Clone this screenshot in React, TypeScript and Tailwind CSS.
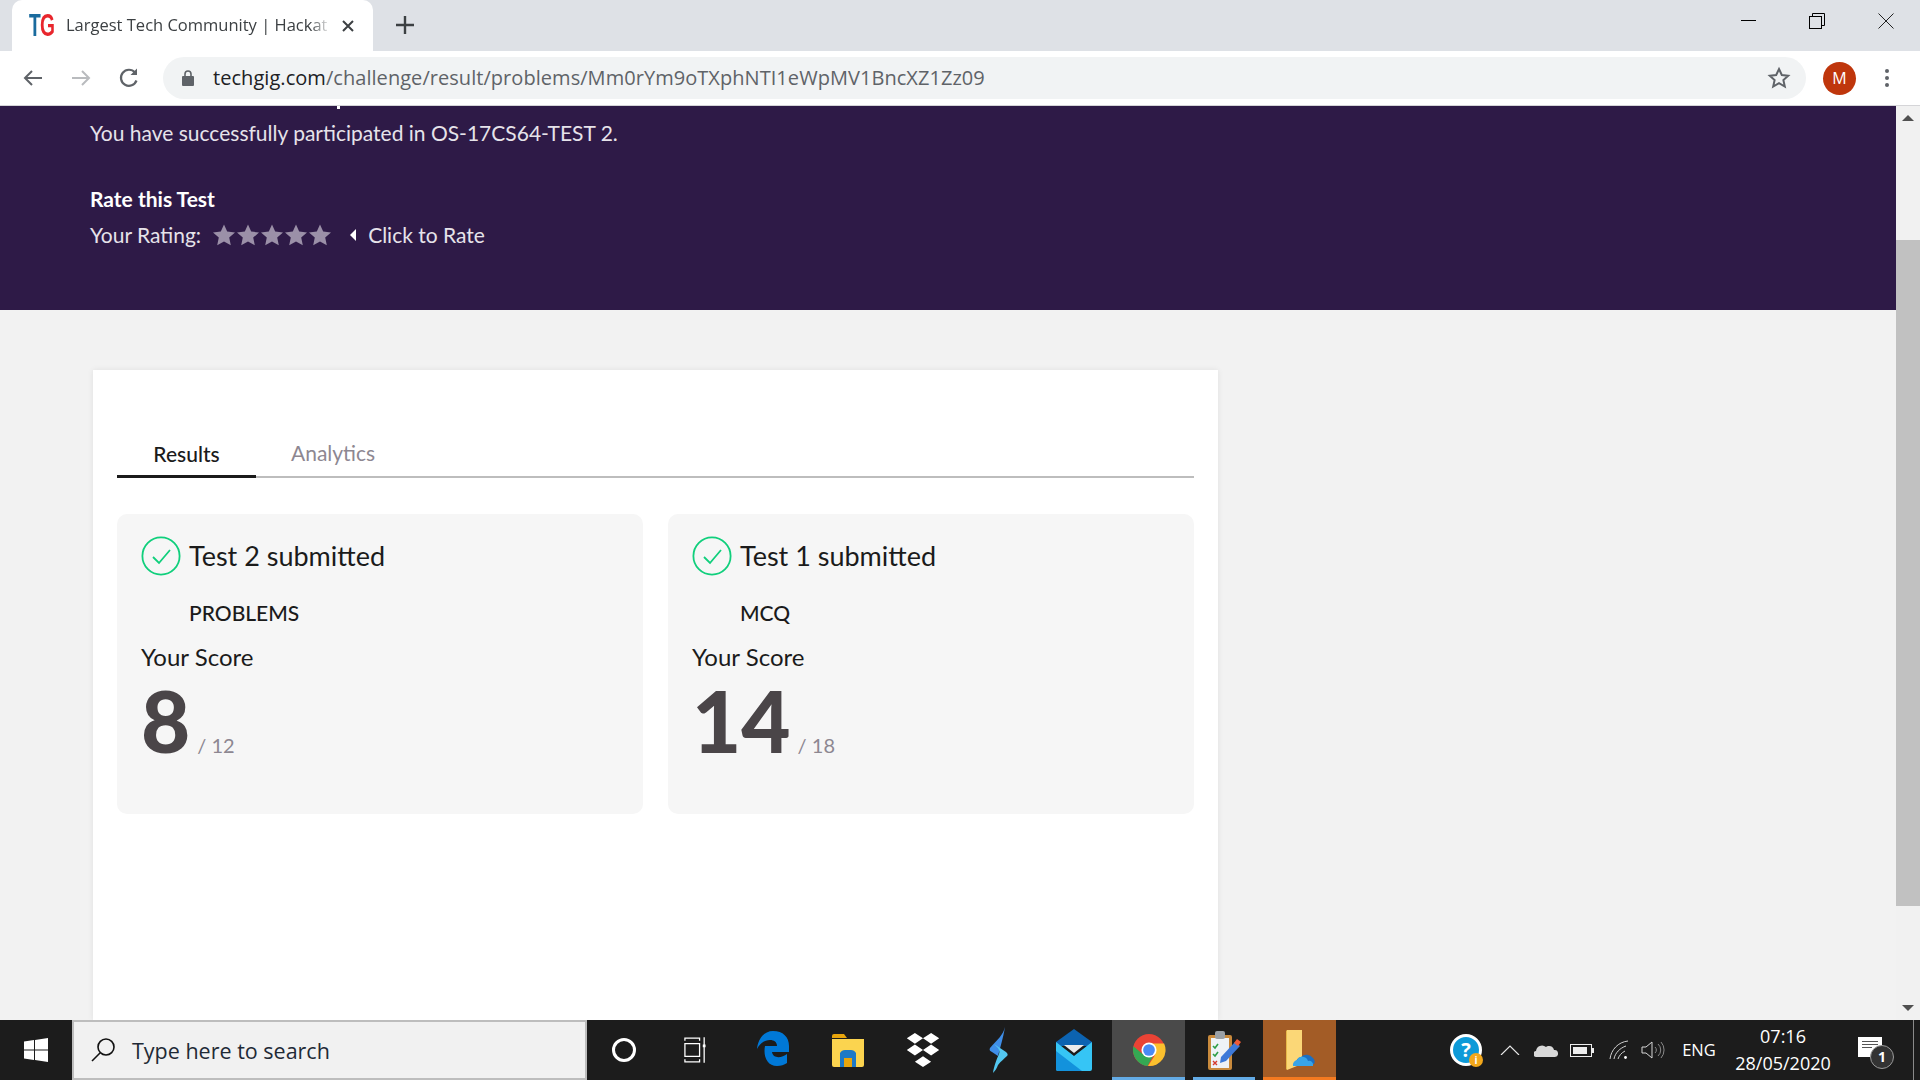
const LATO = "font-['Lato','Noto_Sans',sans-serif]";

function Star({ className }: { className?: string }) {
  return (
    <svg viewBox="0 0 24 24" className={className}>
      <path fill="currentColor" d="M12 1.5l3.2 7.1 7.8.8-5.8 5.2 1.6 7.7L12 18.4l-6.8 3.9 1.6-7.7L1 9.4l7.8-.8z" />
    </svg>
  );
}

function CheckCircle() {
  return (
    <svg viewBox="0 0 40 40" className="h-[40px] w-[40px] shrink-0">
      <circle cx="20" cy="20" r="18.6" fill="none" stroke="#10cf7c" strokeWidth="1.8" />
      <path d="M12 21l6 6 11-13" fill="none" stroke="#10cf7c" strokeWidth="1.8" />
    </svg>
  );
}

function ResultCard({ title, kind, score, total }: { title: string; kind: string; score: string; total: string }) {
  return (
    <div className="h-[300px] w-[526px] rounded-[10px] bg-[#f6f6f6] px-[24px] pt-[22px]">
      <div className="flex h-[40px] items-center gap-[8px]">
        <CheckCircle />
        <span className="text-[27px] leading-[40px] text-[#1b1b1b]">{title}</span>
      </div>
      <div className="mt-[23px] pl-[48px] text-[21px] leading-[28px] font-medium text-[#1b1b1b]">{kind}</div>
      <div className="mt-[15px] text-[24px] leading-[30px] text-[#1b1b1b]">Your Score</div>
      <div className="mt-[3px] flex items-baseline gap-[7px]">
        <span className="text-[85px] leading-[90px] font-black text-[#4a4548]">{score}</span>
        <span className="text-[20px] text-[#8d8791]">/ {total}</span>
      </div>
    </div>
  );
}

function WindowControls() {
  return (
    <div className="ml-auto flex h-[51px] items-start">
      <div className="flex h-[40px] w-[69px] items-center justify-center">
        <div className="h-[1px] w-[15px] bg-black" />
      </div>
      <div className="flex h-[42px] w-[69px] items-center justify-center pr-[2px]">
        <svg viewBox="0 0 16 16" className="h-[16px] w-[16px]" fill="none" stroke="#000" strokeWidth="1">
          <rect x="0.5" y="3.5" width="12" height="12" />
          <path d="M3.5 3.5v-3h12v12h-3" />
        </svg>
      </div>
      <div className="flex h-[42px] w-[68px] items-center justify-center">
        <svg viewBox="0 0 16 16" className="h-[16px] w-[16px]" fill="none" stroke="#222" strokeWidth="1">
          <path d="M0.5 0.5l15 15M15.5 0.5l-15 15" />
        </svg>
      </div>
    </div>
  );
}

function TabStrip() {
  return (
    <div className="flex h-[51px] bg-[#dee1e6] pl-[12px]">
      <div className="flex h-[51px] w-[361px] items-center rounded-t-[10px] bg-white pr-[19px] pl-[17px]">
        <span className="w-[29px] shrink-0 origin-left scale-x-[0.62] font-['Liberation_Sans',sans-serif] text-[31px] leading-none font-bold tracking-[-1px] whitespace-nowrap">
          <span className="text-[#1a6b9e]">T</span>
          <span className="text-[#e8262d]">G</span>
        </span>
        <span className="ml-[8px] w-[265px] overflow-hidden font-['Open_Sans',sans-serif] text-[16.5px] whitespace-nowrap text-[#3c4043] [mask-image:linear-gradient(to_right,#000_92%,transparent)]">
          Largest Tech Community | Hackat
        </span>
        <svg viewBox="0 0 12 12" className="ml-auto h-[12px] w-[12px]" fill="none" stroke="#3c4043" strokeWidth="2">
          <path d="M1 1l10 10M11 1L1 11" />
        </svg>
      </div>
      <svg viewBox="0 0 18 18" className="mt-[16px] ml-[23px] h-[18px] w-[18px]" fill="none" stroke="#3c4043" strokeWidth="2.4">
        <path d="M9 0v18M0 9h18" />
      </svg>
      <WindowControls />
    </div>
  );
}

function AddressBar() {
  return (
    <div className="flex h-[55px] items-center border-b border-[#d5d5d8] bg-white">
      <div className="flex w-[163px] items-center">
        <svg viewBox="0 0 24 24" className="ml-[21px] h-[24px] w-[24px]" fill="none" stroke="#5f6368" strokeWidth="2">
          <path d="M21 12H4M11 5l-7 7 7 7" />
        </svg>
        <svg viewBox="0 0 24 24" className="ml-[24px] h-[24px] w-[24px]" fill="none" stroke="#b9bbbe" strokeWidth="2">
          <path d="M3 12h17M13 5l7 7-7 7" />
        </svg>
        <svg viewBox="0 0 24 24" className="ml-[24px] h-[24px] w-[24px]" fill="none" stroke="#5f6368" strokeWidth="2.2">
          <path d="M19.5 14.5A8 8 0 1 1 18 6.5" />
          <path d="M20 2.5v6.5h-6.5" fill="#5f6368" stroke="none" />
        </svg>
      </div>
      <div className="flex h-[42px] w-[1643px] items-center rounded-full bg-[#f1f3f4] pr-[15px] pl-[19px]">
        <svg viewBox="0 0 12 16" className="h-[16px] w-[12px]">
          <path fill="#5f6368" d="M1 6h10a1 1 0 0 1 1 1v8a1 1 0 0 1-1 1H1a1 1 0 0 1-1-1V7a1 1 0 0 1 1-1z" />
          <path fill="none" stroke="#5f6368" strokeWidth="1.6" d="M3 6V4a3 3 0 0 1 6 0v2" />
        </svg>
        <span className="ml-[19px] font-['Open_Sans',sans-serif] text-[20px] tracking-[0.05px] whitespace-nowrap text-[#5f6368]">
          <span className="text-[#202124]">techgig.com</span>/challenge/result/problems/Mm0rYm9oTXphNTI1eWpMV1BncXZ1Zz09
        </span>
        <svg viewBox="0 0 24 24" className="ml-auto h-[24px] w-[24px]" fill="none" stroke="#5f6368" strokeWidth="2">
          <path d="M12 3l2.8 6 6.4.7-4.8 4.4 1.4 6.4L12 17.2l-5.8 3.3 1.4-6.4-4.8-4.4 6.4-.7z" />
        </svg>
      </div>
      <div className="ml-[17px] flex h-[33px] w-[33px] items-center justify-center rounded-full bg-[#bf360c] font-['Open_Sans',sans-serif] text-[16px] text-white">
        M
      </div>
      <div className="ml-[29px] flex flex-col gap-[3px]">
        <div className="h-[4px] w-[4px] rounded-full bg-[#5f6368]" />
        <div className="h-[4px] w-[4px] rounded-full bg-[#5f6368]" />
        <div className="h-[4px] w-[4px] rounded-full bg-[#5f6368]" />
      </div>
    </div>
  );
}

function Scrollbar() {
  return (
    <div className="flex w-[24px] shrink-0 flex-col bg-[#f1f1f1]">
      <div className="flex h-[24px] items-center justify-center">
        <div className="h-0 w-0 border-x-[6px] border-b-[6px] border-x-transparent border-b-[#505050]" />
      </div>
      <div className="mt-[110px] h-[666px] bg-[#c1c1c1]" />
      <div className="mt-auto flex h-[24px] items-center justify-center">
        <div className="h-0 w-0 border-x-[6px] border-t-[6px] border-x-transparent border-t-[#505050]" />
      </div>
    </div>
  );
}

function Page() {
  return (
    <div className={`relative flex min-w-0 flex-1 flex-col overflow-hidden bg-[#f2f2f2] ${LATO}`}>
      <div className="absolute top-0 left-[337px] h-[3px] w-[3px] bg-white" />
      <div className="h-[204px] shrink-0 bg-[#2e1a47] pt-[13px] pl-[90px] text-white">
        <div className="text-[21px] leading-[28px] text-[#e6e3ea]">You have successfully participated in OS-17CS64-TEST 2.</div>
        <div className="mt-[38px] text-[21px] leading-[28px] font-bold">Rate this Test</div>
        <div className="mt-[8px] flex h-[28px] items-center text-[21px] text-[#e6e3ea]">
          <span>Your Rating:</span>
          <div className="ml-[11px] flex text-[#9b90a8]">
            <Star className="h-[24px] w-[24px]" />
            <Star className="h-[24px] w-[24px]" />
            <Star className="h-[24px] w-[24px]" />
            <Star className="h-[24px] w-[24px]" />
            <Star className="h-[24px] w-[24px]" />
          </div>
          <div className="mr-[12px] ml-[18px] h-0 w-0 border-y-[6px] border-r-[6px] border-y-transparent border-r-white" />
          <span>Click to Rate</span>
        </div>
      </div>
      <div className="mt-[60px] ml-[93px] w-[1125px] flex-1 bg-white px-[24px] pt-[62px] shadow-[0_0_6px_rgba(0,0,0,0.08)]">
        <div className="flex h-[46px] items-end border-b-2 border-[#bdbdbd]">
          <div className="-mb-[2px] flex h-[46px] w-[139px] items-center justify-center border-b-[3px] border-[#1b1b1b] text-[21px] font-medium text-[#1b1b1b]">
            Results
          </div>
          <div className="flex h-[46px] items-center pl-[35px] text-[21px] text-[#8d8791]">Analytics</div>
        </div>
        <div className="mt-[36px] flex gap-[25px]">
          <ResultCard title="Test 2 submitted" kind="PROBLEMS" score="8" total="12" />
          <ResultCard title="Test 1 submitted" kind="MCQ" score="14" total="18" />
        </div>
      </div>
    </div>
  );
}

function Slot({ w, className, children }: { w: string; className?: string; children: React.ReactNode }) {
  return <div className={`flex h-full items-center justify-center ${w} ${className ?? ""}`}>{children}</div>;
}

function Taskbar() {
  return (
    <div className="flex h-[60px] shrink-0 items-stretch bg-[#1c1c1c]">
      <Slot w="w-[72px]">
        <svg viewBox="0 0 24 24" className="h-[24px] w-[24px]" fill="#fff">
          <path d="M0 3.5l10-1.4v9.4H0zM11 2l13-2v11.5H11zM0 12.5h10v9.4L0 20.5zM11 12.5h13V24l-13-2z" />
        </svg>
      </Slot>
      <div className="flex w-[515px] items-center border-2 border-[#bdbdbd] bg-[#f1f1f1] pl-[16px] font-['Open_Sans',sans-serif] text-[21.5px] text-[#1f2a36]">
        <svg viewBox="0 0 26 26" className="h-[26px] w-[26px]" fill="none" stroke="#111" strokeWidth="1.6">
          <circle cx="16" cy="10" r="8" />
          <path d="M10 16L2 24" />
        </svg>
        <span className="mt-[3px] ml-[16px]">Type here to search</span>
      </div>
      <Slot w="w-[74px]">
        <div className="h-[24px] w-[24px] rounded-full border-[3px] border-white" />
      </Slot>
      <Slot w="w-[68px]">
        <svg viewBox="0 0 24 30" className="h-[28px] w-[22px]" fill="none" stroke="#fff" strokeWidth="1.4">
          <path d="M1 5V2h16v3M1 25v3h16v-3M1 8h16v14H1zM22 1v28" />
          <rect x="20.5" y="9" width="3" height="3" fill="#fff" stroke="none" />
        </svg>
      </Slot>
      <Slot w="w-[84px]" className="pl-[3px]">
        <svg viewBox="0 0 32 40" className="h-[40px] w-[32px]" fill="none">
          <path fill="#0078d7" d="M16 1C7 1 1 9 0 19c3-6 8-9 13-9 4 0 7 2 7 6H8c-2 10 2 20 12 20 4 0 7-1 10-3v-9c-5 4-14 5-15-2h17v-6C32 7 26 1 16 1z" />
        </svg>
      </Slot>
      <Slot w="w-[72px]" className="pr-[2px]">
        <svg viewBox="0 0 32 34" className="h-[34px] w-[32px]">
          <path fill="#e8a50c" d="M0 3a2 2 0 0 1 2-2h10l3 4H0z" />
          <path fill="#fbd44f" d="M0 6h32v26a2 2 0 0 1-2 2H2a2 2 0 0 1-2-2z" />
          <path fill="#1d79c7" d="M8 20a6 6 0 0 1 6-3h4a6 6 0 0 1 6 3v14h-4v-9h-8v9H8z" />
          <rect x="12" y="25" width="8" height="9" fill="#e8a50c" />
        </svg>
      </Slot>
      <Slot w="w-[78px]" className="pr-[2px]">
        <svg viewBox="0 0 36 40" className="h-[36px] w-[34px]" fill="#fff">
          <path d="M9 1l9 6-9 6-9-6zM27 1l9 6-9 6-9-6zM9 14l9 6-9 6-9-6zM27 14l9 6-9 6-9-6zM18 27l9 6-9 6-9-6z" />
        </svg>
      </Slot>
      <Slot w="w-[74px]" className="pr-[2px]">
        <svg viewBox="0 0 20 46" className="h-[46px] w-[20px]">
          <path fill="#3f8ee8" d="M16 0C14 8 9 12 1 21c-1 2 0 3 2 4l6 4c2-8 5-17 7-29z" />
          <path fill="#53c7f0" d="M5 17l12 8c2 2 2 3 1 4-3 3-6 5-9 9-1 3-3 6-5 8 1-7 4-15 6-19 1-3 0-5-2-7z" />
        </svg>
      </Slot>
      <Slot w="w-[75px]" className="pr-[2px]">
        <svg viewBox="0 0 36 42" className="h-[42px] w-[36px]">
          <path fill="#0c63b1" d="M18 0l18 13v4H0v-4z" />
          <path fill="#36c5f5" d="M0 13l18 14 18-14v27a2 2 0 0 1-2 2H2a2 2 0 0 1-2-2z" />
          <path fill="#1392dc" d="M0 40V22l26 20H2a2 2 0 0 1-2-2z" />
          <path fill="#ececec" d="M8 16h20l-10 8z" />
        </svg>
      </Slot>
      <Slot w="w-[73px]" className="relative bg-[#4a4a4a]">
        <svg viewBox="0 0 36 36" className="h-[34px] w-[34px]">
          <circle cx="18" cy="18" r="17" fill="#ea4335" />
          <path fill="#34a853" d="M1.5 14a17 17 0 0 0 15 20.9L23 23l-12-1z" />
          <path fill="#fbc02d" d="M18 11h16a17 17 0 0 1-17 24l7-11z" />
          <circle cx="18" cy="18" r="8" fill="#fff" />
          <circle cx="18" cy="18" r="6.2" fill="#4a8af4" />
        </svg>
        <div className="absolute inset-x-0 bottom-0 h-[3px] bg-[#63abe6]" />
      </Slot>
      <Slot w="w-[62px]" className="relative ml-[8px]">
        <svg viewBox="0 0 34 44" className="h-[44px] w-[34px]">
          <rect x="1" y="7" width="24" height="35" rx="2" fill="#c98a3c" />
          <rect x="4" y="10" width="18" height="30" fill="#eef2f6" />
          <rect x="8" y="3" width="10" height="8" rx="2" fill="#9aa0a6" />
          <path d="M6 18l2 2 3-4M6 26l2 2 3-4" fill="none" stroke="#2e9e47" strokeWidth="1.6" />
          <path d="M6 33l4 4M10 33l-4 4" fill="none" stroke="#d63b2f" strokeWidth="1.4" />
          <path d="M14 29l14-15 5 4-14 15-6 2z" fill="#3d79d8" />
          <path d="M27 15l3-4 4 3-3 4z" fill="#ef5a35" />
        </svg>
        <div className="absolute inset-x-0 bottom-0 h-[3px] bg-[#63abe6]" />
      </Slot>
      <Slot w="w-[73px]" className="relative ml-[8px] bg-[#a35c26]">
        <svg viewBox="0 0 30 40" className="h-[40px] w-[30px]">
          <path fill="#fbd777" d="M2 0h15v34L2 40z" />
          <path fill="#e7b94a" d="M2 0l-1 1v38l1 1z" />
          <path fill="#1b6fc1" d="M11 34a6 6 0 0 1 5-7 8 8 0 0 1 12 1 5 5 0 0 1 1 6z" />
          <path fill="#38a4e8" d="M8 36a5 5 0 0 1 4-6 6 6 0 0 1 11 1 4 4 0 0 1 5 5z" />
        </svg>
        <div className="absolute inset-x-0 bottom-0 h-[3px] bg-[#f47a20]" />
      </Slot>
      <div className="relative ml-auto flex h-full items-center pr-[7px] font-['Open_Sans',sans-serif] text-white">
        <div className="relative mr-[18px] h-[32px] w-[32px] rounded-full border-[3px] border-white bg-[#0d9ad8] text-center text-[20px] leading-[26px] font-bold">
          ?
          <div className="absolute -right-[4px] -bottom-[4px] h-[14px] w-[14px] rounded-full bg-[#f2a71b] text-[10px] leading-[14px]">i</div>
        </div>
        <svg viewBox="0 0 20 10" className="mr-[14px] h-[10px] w-[20px]" fill="none" stroke="#e6e6e6" strokeWidth="1.2">
          <path d="M1 10l9-9 9 9" />
        </svg>
        <svg viewBox="0 0 24 14" className="mr-[12px] h-[16px] w-[24px]" fill="#d8d8d8">
          <path d="M3 14a3 3 0 0 1-1-6 6 6 0 0 1 10-4 5 5 0 0 1 8 3 3.5 3.5 0 0 1 1 7z" />
        </svg>
        <svg viewBox="0 0 24 13" className="mr-[15px] h-[13px] w-[24px]" fill="none" stroke="#eee" strokeWidth="1">
          <rect x="0.5" y="0.5" width="21" height="12" />
          <rect x="3" y="3" width="14" height="7" fill="#eee" stroke="none" />
          <rect x="22" y="4" width="2" height="5" fill="#eee" stroke="none" />
        </svg>
        <svg viewBox="0 0 20 20" className="mr-[12px] h-[20px] w-[20px]" fill="none" stroke="#cfcfcf" strokeWidth="1">
          <path d="M1 19C2 10 9 2 19 1M5 19c1-6 6-11 12-13M9 19c1-3 3-6 7-8" />
          <circle cx="16.5" cy="17.5" r="1.4" fill="#fff" stroke="none" />
        </svg>
        <svg viewBox="0 0 24 20" className="mr-[17px] h-[20px] w-[24px]" fill="none" stroke="#d8d8d8" strokeWidth="1">
          <path d="M1 7h4l6-5v16l-6-5H1z" />
          <path d="M14 7a4 4 0 0 1 0 6M17 4a8 8 0 0 1 0 12M20 2a12 12 0 0 1 0 16" stroke="#8a8a8a" />
        </svg>
        <span className="mr-[15px] w-[34px] text-center text-[16.5px]">ENG</span>
        <div className="mr-[23px] flex w-[104px] flex-col items-center text-[18px] leading-[27px]">
          <span>07:16</span>
          <span className="whitespace-nowrap">28/05/2020</span>
        </div>
        <div className="relative mr-[31px] h-[26px] w-[24px]">
          <div className="flex h-[20px] w-[24px] flex-col gap-[2px] bg-white px-[4px] pt-[4px]">
            <div className="h-[1px] bg-[#555]" />
            <div className="h-[1px] bg-[#555]" />
            <div className="h-[1px] w-[10px] bg-[#555]" />
          </div>
          <div className="absolute -right-[12px] bottom-[-6px] h-[24px] w-[24px] rounded-full border border-[#9a9a9a] bg-[#333] text-center text-[14px] leading-[22px] font-bold">
            1
          </div>
        </div>
        <div className="absolute top-0 right-[6px] h-full w-[1px] bg-[#8a8a8a]" />
      </div>
    </div>
  );
}

export default function App() {
  return (
    <div className="flex h-screen w-full flex-col overflow-hidden bg-white">
      <TabStrip />
      <AddressBar />
      <div className="flex min-h-0 flex-1">
        <Page />
        <Scrollbar />
      </div>
      <Taskbar />
    </div>
  );
}
